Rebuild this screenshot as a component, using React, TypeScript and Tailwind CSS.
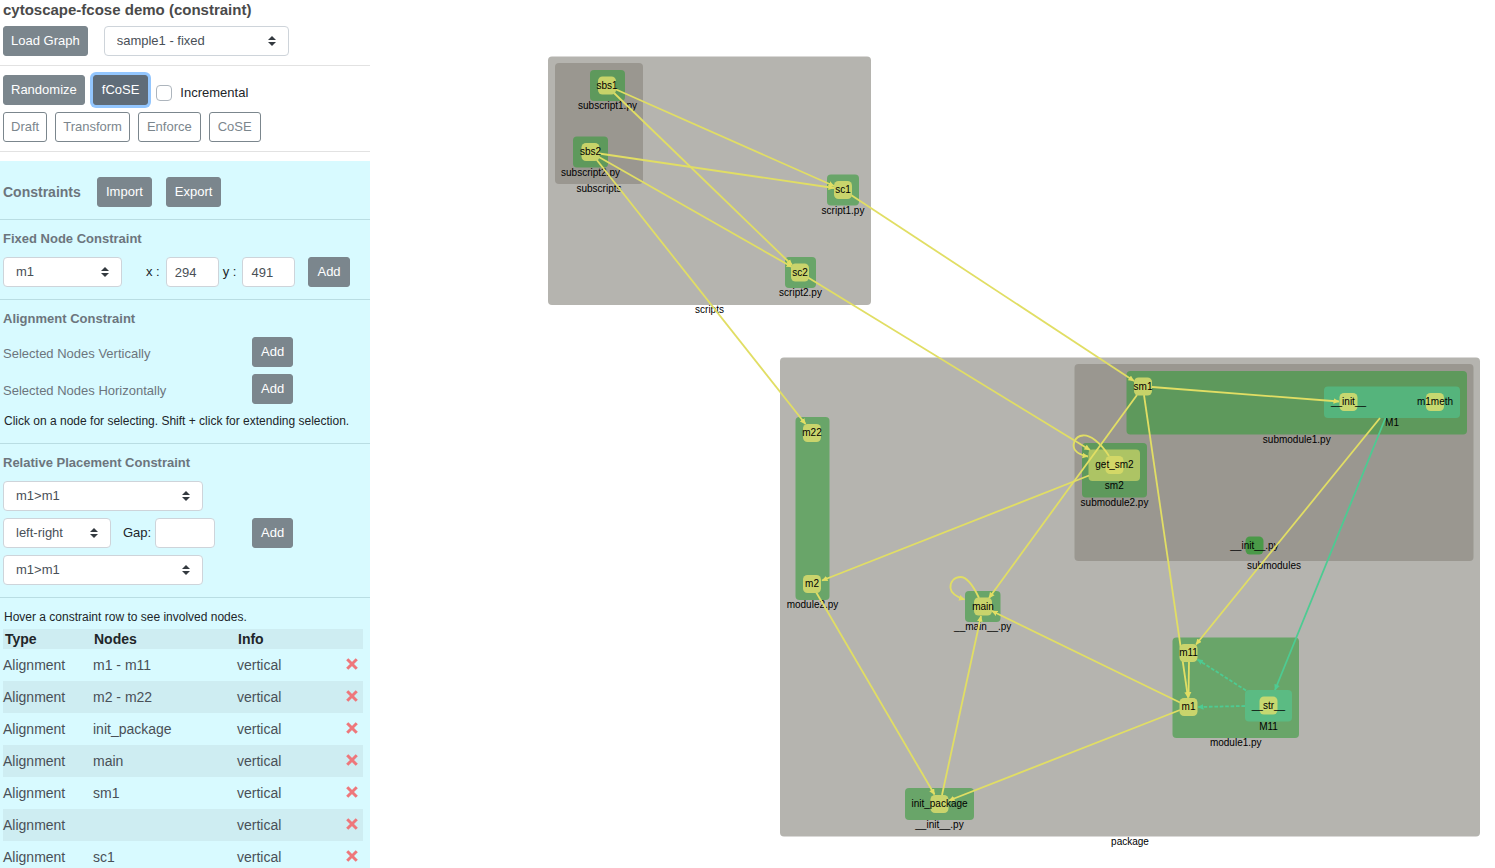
import React, { useState } from "react";

type ButtonProps = React.ButtonHTMLAttributes<HTMLButtonElement> & {
  tone?: "solid" | "outline" | "focused";
  compact?: boolean;
};

const tones = {
  solid: "border-[#7b868d] bg-[#7b868d] text-white",
  outline: "border-[#7b868d] bg-white text-[#7b868d]",
  focused: "border-[#5f6c78] bg-[#5f6c78] text-white ring-3 ring-[#93c6fe]",
};

function Button({ tone = "solid", compact = false, children, ...rest }: ButtonProps) {
  return (
    <button
      type="button"
      className={`h-[30px] shrink-0 rounded-[3px] border text-[13px] leading-5 ${compact ? "px-[7px]" : "px-2"} ${tones[tone]}`}
      {...rest}
    >
      {children}
    </button>
  );
}

function Select({ label, options, className }: { label: string; options: string[]; className: string }) {
  return (
    <div className={`relative ${className}`}>
      <select
        aria-label={label}
        className="h-[30px] w-full appearance-none rounded-[4px] border border-[#ced4da] bg-white pr-6 pl-3 text-[13px] text-[#495057]"
      >
        {options.map((o) => (
          <option key={o}>{o}</option>
        ))}
      </select>
      <svg
        viewBox="0 0 4 5"
        className="pointer-events-none absolute top-[10px] right-[13px] h-[10px] w-2"
        aria-hidden="true"
      >
        <path fill="#343a40" d="M2 0L0 2h4zm0 5L0 3h4z" />
      </svg>
    </div>
  );
}

const inputClass =
  "h-[30px] rounded-[4px] border border-[#ced4da] bg-white px-2 text-[13px] text-[#495057]";

function Section({ title, children }: { title: string; children: React.ReactNode }) {
  return (
    <section className="border-b border-[#b9dde3] px-[3px] pt-[9px] pb-3">
      <h2 className="mb-2 text-[13px] leading-5 font-bold text-[#6c757d]">{title}</h2>
      {children}
    </section>
  );
}

const rows = ["m1 - m11", "m2 - m22", "init_package", "main", "sm1", "", "sc1"];

function Sidebar() {
  const [incremental, setIncremental] = useState(false);
  return (
    <aside className="w-[370px] shrink-0">
      <header className="border-b border-[#e2e2e2] px-[3px] pb-[9px]">
        <h1 className="mb-[6px] text-[15px] leading-5 font-bold text-[#4a4a4a]">
          cytoscape-fcose demo (constraint)
        </h1>
        <div className="flex gap-4">
          <Button compact>Load Graph</Button>
          <Select label="Sample graph" options={["sample1 - fixed"]} className="w-[185px]" />
        </div>
      </header>

      <div className="flex flex-col gap-[7px] border-b border-[#e2e2e2] px-[3px] py-[9px]">
        <div className="flex items-center gap-2">
          <Button compact>Randomize</Button>
          <Button tone="focused">fCoSE</Button>
          <label className="flex items-center gap-2 pt-[6px] text-[13px] leading-5 text-[#212529]">
            <input
              type="checkbox"
              checked={incremental}
              onChange={(e) => setIncremental(e.target.checked)}
              className="size-4 appearance-none rounded-[4px] border border-[#adb5bd] bg-white checked:bg-[#5f6c78]"
            />
            Incremental
          </label>
        </div>
        <div className="flex gap-2">
          <Button tone="outline" compact>Draft</Button>
          <Button tone="outline" compact>Transform</Button>
          <Button tone="outline">Enforce</Button>
          <Button tone="outline">CoSE</Button>
        </div>
      </div>

      <div className="mt-[9px] bg-[#d8faff]">
        <div className="flex items-center border-b border-[#b9dde3] px-[3px] pt-4 pb-3">
          <h2 className="w-[94px] text-[14px] leading-5 font-bold text-[#6c757d]">Constraints</h2>
          <div className="flex gap-[14px]">
            <Button>Import</Button>
            <Button>Export</Button>
          </div>
        </div>

        <Section title="Fixed Node Constraint">
          <div className="flex items-center text-[13px] text-[#212529]">
            <Select label="Fixed node" options={["m1"]} className="mr-6 w-[119px]" />
            <label className="mr-1 flex items-center gap-[6px]">
              <span>x :</span>
              <input defaultValue="294" className={`${inputClass} w-[53px]`} />
            </label>
            <label className="mr-[13px] flex items-center gap-[6px]">
              <span>y :</span>
              <input defaultValue="491" className={`${inputClass} w-[53px]`} />
            </label>
            <Button>Add</Button>
          </div>
        </Section>

        <Section title="Alignment Constraint">
          <div className="flex flex-col gap-[7px] text-[13px] leading-5 text-[#6c757d]">
            <div className="flex items-center">
              <span className="w-[249px] pt-1">Selected Nodes Vertically</span>
              <Button aria-label="Add vertical alignment">Add</Button>
            </div>
            <div className="flex items-center">
              <span className="w-[249px] pt-1">Selected Nodes Horizontally</span>
              <Button aria-label="Add horizontal alignment">Add</Button>
            </div>
            <p className="pl-px text-[12px] whitespace-nowrap text-[#212529]">
              Click on a node for selecting. Shift + click for extending selection.
            </p>
          </div>
        </Section>

        <Section title="Relative Placement Constraint">
          <div className="flex flex-col gap-[7px]">
            <Select label="First node" options={["m1>m1"]} className="w-[200px]" />
            <div className="flex items-center text-[13px] text-[#212529]">
              <Select label="Direction" options={["left-right", "top-bottom"]} className="mr-3 w-[108px]" />
              <label className="flex w-[129px] items-center gap-1">
                <span>Gap:</span>
                <input className={`${inputClass} w-[60px]`} />
              </label>
              <Button>Add</Button>
            </div>
            <Select label="Second node" options={["m1>m1"]} className="w-[200px]" />
          </div>
        </Section>

        <div className="px-[3px] pt-[9px]">
          <p className="mb-[2px] pl-px text-[12px] leading-5 text-[#212529]">
            Hover a constraint row to see involved nodes.
          </p>
          <table className="w-[360px] table-fixed border-collapse text-left text-[14px] text-[#495057]">
            <colgroup>
              <col className="w-[90px]" />
              <col className="w-[144px]" />
              <col className="w-[96px]" />
              <col />
            </colgroup>
            <thead>
              <tr className="h-5 bg-[#ceedf2] leading-5 text-[#212529]">
                <th className="px-[2px]">Type</th>
                <th className="px-px">Nodes</th>
                <th className="px-px">Info</th>
                <th />
              </tr>
            </thead>
            <tbody>
              {rows.map((nodes, i) => (
                <tr key={i} className="h-8 even:bg-[#ceedf2] hover:bg-[#c2e4ea]">
                  <td>Alignment</td>
                  <td>{nodes}</td>
                  <td>vertical</td>
                  <td>
                    <div className="flex justify-end pr-[5px] pb-[3px]">
                      <button type="button" aria-label="Remove constraint">
                        <svg viewBox="0 0 12 12" className="block size-3">
                          <path
                            d="M2.3 2.3L9.7 9.7M9.7 2.3L2.3 9.7"
                            stroke="#ee777b"
                            strokeWidth="3"
                            strokeLinecap="square"
                          />
                        </svg>
                      </button>
                    </div>
                  </td>
                </tr>
              ))}
            </tbody>
          </table>
        </div>
      </div>
    </aside>
  );
}

// Compound nodes: x, y, width, height, fill, label
type Box = [number, number, number, number, string, string];

const compounds: Box[] = [
  [548, 56.5, 323, 248.5, "#b5b4af", "scripts"],
  [555, 63, 88, 121, "#9a9790", "subscripts"],
  [590, 70, 35, 31, "#5e995c", "subscript1.py"],
  [573, 136.5, 35, 31, "#5e995c", "subscript2.py"],
  [827, 174.5, 32, 31, "#69a569", "script1.py"],
  [785, 257, 31, 31, "#69a569", "script2.py"],
  [780, 357.5, 700, 479, "#b5b4af", "package"],
  [1074.5, 364, 399, 197, "#9a9790", "submodules"],
  [1126.5, 371, 340.5, 63.5, "#5e995c", "submodule1.py"],
  [1324, 386.5, 136, 31.5, "#55b47c", "M1"],
  [1082, 443, 65, 54.5, "#5e995c", "submodule2.py"],
  [1088.5, 449.5, 51.5, 31.5, "#adc464", "sm2"],
  [795.5, 417, 34, 183, "#69a569", "module2.py"],
  [965, 591, 35.5, 31, "#69a569", "__main__.py"],
  [1172.5, 637.5, 126.5, 100.5, "#69a569", "module1.py"],
  [1245, 690, 47, 31.5, "#5bbb83", "M11"],
  [905, 788, 69, 32, "#69a569", "__init__.py"],
];

// Leaf nodes: centre x, centre y, label, fill
type Leaf = [number, number, string, string];

const fileLeaves: Leaf[] = [[1254.5, 545.5, "__init__.py", "#4a9948"]];

const leaves: Leaf[] = [
  [607, 85.5, "sbs1", "#c7d369"],
  [590.5, 152, "sbs2", "#c7d369"],
  [843, 190, "sc1", "#c9d46c"],
  [800, 272.5, "sc2", "#c9d46c"],
  [1143, 386.5, "sm1", "#c7d369"],
  [1348.5, 402, "__init__", "#c6d870"],
  [1435, 402, "m1meth", "#c6d870"],
  [1114.5, 465, "get_sm2", "#d3d867"],
  [812, 433, "m22", "#c9d46c"],
  [812, 584, "m2", "#c9d46c"],
  [983, 606.5, "main", "#c9d46c"],
  [1188.5, 653, "m11", "#c9d46c"],
  [1188.5, 707, "m1", "#c9d46c"],
  [1268.5, 705.5, "__str__", "#c6d870"],
  [939.5, 804, "init_package", "#c9d46c"],
];

const yellowEdges = [
  "M615 89L834 186",
  "M613 92L792 265",
  "M599 153.5L834 188",
  "M598 156.5L792 267",
  "M596 159L805.5 424",
  "M851 195L1134 381",
  "M808 277.5L1090 450",
  "M1152 387L1339 401.5",
  "M1137 395L989 598",
  "M1144 395L1188 697.5",
  "M1189 661L1188.5 697.5",
  "M1380 418L1196 644.5",
  "M1089 475.5L822 580.5",
  "M816 592L934.5 794.5",
  "M942 795L981 616",
  "M1180 702.5L992 611",
  "M1180 710L949 800.5",
  "M1109 456C1100 442 1090 435 1083 435.5C1074 436 1072 446 1075 450C1078 454 1082 455.5 1088 456.5",
  "M979 598C972 583 966 577 960.5 577C954 577 950 582 950.5 588C951 594 957 597 964.5 599.5",
];

function LeafNodes({ nodes }: { nodes: Leaf[] }) {
  return (
    <>
      {nodes.map(([x, y, label, fill], i) => (
        <g key={i}>
          <rect x={x - 9} y={y - 9} width="18" height="18" rx="4.5" fill={fill} />
          <text x={x} y={y + 3} textAnchor="middle">
            {label}
          </text>
        </g>
      ))}
    </>
  );
}

function Graph() {
  return (
    <svg
      viewBox="370 0 1125 868"
      preserveAspectRatio="xMinYMin meet"
      className="block w-full font-['Liberation_Sans',Arial,sans-serif] text-[10px]"
      role="img"
      aria-label="Package dependency graph"
    >
      <defs>
        <marker id="yellow" markerUnits="userSpaceOnUse" markerWidth="6" markerHeight="6" refX="5.5" refY="3" orient="auto">
          <path d="M0 0.2L6 3L0 5.8z" fill="#e1de64" />
        </marker>
        <marker id="teal" markerUnits="userSpaceOnUse" markerWidth="6" markerHeight="6" refX="5.5" refY="3" orient="auto">
          <path d="M0 0.2L6 3L0 5.8z" fill="#4dcb92" />
        </marker>
      </defs>
      {compounds.map(([x, y, w, h, fill, label], i) => (
        <g key={i}>
          <rect x={x} y={y} width={w} height={h} rx="4" fill={fill} />
          <text x={x + w / 2} y={y + h + 8} textAnchor="middle">
            {label}
          </text>
        </g>
      ))}
      <LeafNodes nodes={fileLeaves} />
      <g fill="none" strokeWidth="1.8">
        {yellowEdges.map((d) => (
          <path key={d} d={d} stroke="#e1de64" markerEnd="url(#yellow)" />
        ))}
        <path d="M1385.5 418L1275 690" stroke="#4dcb92" markerEnd="url(#teal)" />
        <path d="M1246 690.5L1197.5 659.5" stroke="#4dcb92" strokeDasharray="3.6 1.8" markerEnd="url(#teal)" />
        <path d="M1245 706L1198 707" stroke="#4dcb92" strokeDasharray="3.6 1.8" markerEnd="url(#teal)" />
      </g>
      <LeafNodes nodes={leaves} />
    </svg>
  );
}

export default function App() {
  return (
    <div className="flex h-screen overflow-hidden bg-white font-['Liberation_Sans',Arial,sans-serif]">
      <Sidebar />
      <main className="min-w-0 flex-1">
        <Graph />
      </main>
    </div>
  );
}
